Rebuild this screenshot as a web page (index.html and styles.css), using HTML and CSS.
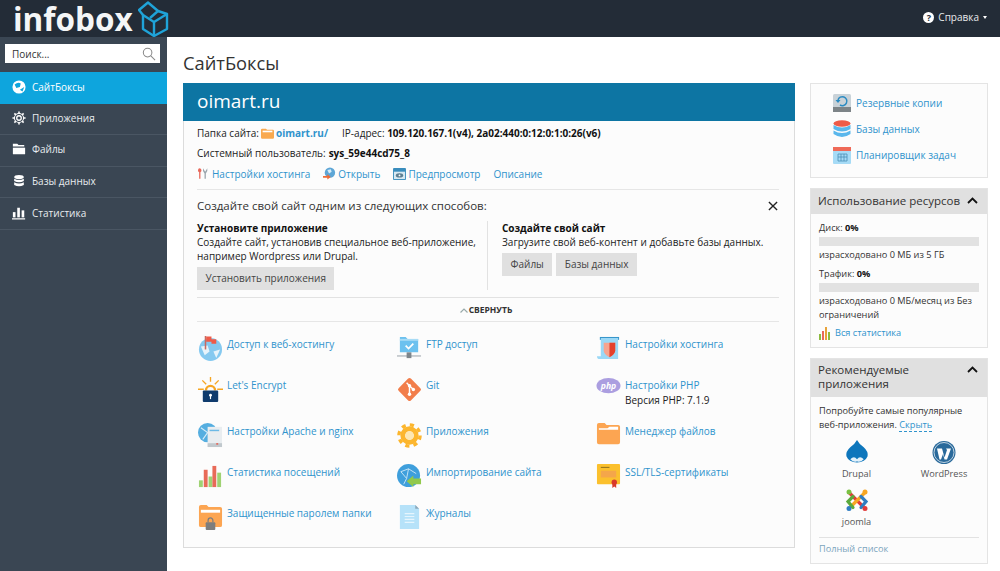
FILE: index.html
```html
<!DOCTYPE html>
<html lang="ru">
<head>
<meta charset="utf-8">
<title>СайтБоксы</title>
<link rel="stylesheet" href="styles.css">
</head>
<body>
<header class="topbar">
  <div class="brand">
    <span class="brand-name">infobox</span>
    <svg class="brand-cube" width="31" height="36" viewBox="0 0 31 36" fill="none" stroke="#1fa3d8" stroke-width="2.4" stroke-linejoin="round"><path d="M5 14 L16 21 L29 13 V28 L16 35 L5 28 Z"/><path d="M16 21 V35"/><path d="M5 14 L1 9 L10 1.500 L20 10 L12 17"/><path d="M20 10 L29 13"/></svg>
  </div>
  <div class="help"><span class="help-q">?</span><span>Справка</span><span class="caret"></span></div>
</header>
<div class="layout">
  <aside class="sidebar">
    <div class="search"><span>Поиск...</span>
      <svg width="14" height="14" viewBox="0 0 15 15" fill="none" stroke="#888" stroke-width="1.100"><circle cx="6" cy="6" r="4.600"/><path d="M9.500 9.500 L14 14"/></svg>
    </div>
    <nav>
      <a class="nav-item active"><svg width="14" height="14" viewBox="0 0 16 16"><circle cx="8" cy="8" r="7.500" fill="#fff"/><path d="M3 5 Q7 2 10 4 L9 8 L5 9 Z M9 11 L14 8 L12 13 Z" fill="#0ea5dd"/></svg>СайтБоксы</a>
      <a class="nav-item"><svg width="14" height="14" viewBox="0 0 16 16" fill="none" stroke="#fff"><circle cx="8" cy="8" r="2.600" stroke-width="1.500"/><circle cx="8" cy="8" r="5.200" stroke-width="1.200"/><path d="M8 0.500V3M8 13V15.500M0.500 8H3M13 8H15.500M2.700 2.700L4.400 4.400M11.600 11.600L13.300 13.300M2.700 13.300L4.400 11.600M11.600 4.400L13.300 2.700" stroke-width="1.800"/></svg>Приложения</a>
      <a class="nav-item"><svg width="14" height="14" viewBox="0 0 16 16" fill="#fff"><path d="M1 2H6L7.500 3.500H14V5H1Z"/><path d="M1 6.500H15V14H1Z"/></svg>Файлы</a>
      <a class="nav-item"><svg width="14" height="14" viewBox="0 0 16 16" fill="#fff"><ellipse cx="8" cy="3.500" rx="5.500" ry="2.400"/><path d="M2.500 5.500Q8 8.400 13.500 5.500V8Q8 10.800 2.500 8Z"/><path d="M2.500 9.500Q8 12.400 13.500 9.500V12.500Q8 15.600 2.500 12.500Z"/></svg>Базы данных</a>
      <a class="nav-item"><svg width="14" height="14" viewBox="0 0 16 16" fill="#fff"><rect x="1" y="7" width="3" height="6"/><rect x="6" y="2" width="3" height="11"/><rect x="11" y="5" width="3" height="8"/><rect x="0" y="14" width="15" height="1.400"/></svg>Статистика</a>
    </nav>
  </aside>
  <main class="content">
    <h1 class="page-title">СайтБоксы</h1>
    <div class="columns">
      <section class="site">
        <div class="site-head">oimart.ru</div>
        <div class="site-body">
          <div class="info-line"><span>Папка сайта:</span>
            <svg class="ic-inline" width="13" height="11" viewBox="0 0 16 13"><path d="M0 2Q0 0.500 1.500 0.500H6L7.500 2H14.500Q16 2 16 3.500V11.500Q16 13 14.500 13H1.500Q0 13 0 11.500Z" fill="#f9a94f"/><rect x="2" y="3" width="12" height="2" fill="#fff"/></svg>
            <a class="link strong">oimart.ru/</a><span class="ip">IP-адрес: <b>109.120.167.1(v4), 2a02:440:0:12:0:1:0:26(v6)</b></span>
          </div>
          <div class="info-line"><span>Системный пользователь:</span><b>sys_59e44cd75_8</b></div>
          <div class="actions">
            <a class="link action wide"><svg width="12" height="13" viewBox="0 0 14 14"><path d="M3 1a2.400 2.400 0 0 1 1 4.500V13H2.500V5.500A2.400 2.400 0 0 1 3 1Z" fill="#e8685a"/><path d="M7 1L9.500 5L12 1V4L10.300 7V13H8.800V7L7 4Z" fill="#9aa5ad"/></svg>Настройки хостинга</a>
            <a class="link action"><svg width="13" height="13" viewBox="0 0 15 14"><circle cx="8" cy="6" r="6" fill="#5ea6d6"/><path d="M5 3L9 2L10 5L7 7Z" fill="#d7ecf8"/><path d="M0 10H5V8L9 11L5 14V12H0Z" fill="#ef6c36"/></svg>Открыть</a>
            <a class="link action"><svg width="13" height="12" viewBox="0 0 14 13"><rect width="14" height="13" rx="1" fill="#3a8dbd"/><rect x="1" y="4" width="12" height="8" fill="#d8e9f2"/><ellipse cx="7" cy="8" rx="4" ry="2.300" fill="#5d7f92"/><circle cx="7" cy="8" r="1" fill="#fff"/></svg>Предпросмотр</a>
            <a class="link action">Описание</a>
          </div>
          <div class="create">
            <div class="create-head"><span>Создайте свой сайт одним из следующих способов:</span>
              <svg width="10" height="10" viewBox="0 0 11 11" stroke="#222" stroke-width="1.500"><path d="M1 1L10 10M10 1L1 10"/></svg>
            </div>
            <div class="create-cols">
              <div class="create-left">
                <b>Установите приложение</b>
                <p>Создайте сайт, установив специальное веб-приложение, например Wordpress или Drupal.</p>
                <span class="btn">Установить приложения</span>
              </div>
              <div class="create-right">
                <b>Создайте свой сайт</b>
                <p>Загрузите свой веб-контент и добавьте базы данных.</p>
                <div class="btn-row"><span class="btn">Файлы</span><span class="btn">Базы данных</span></div>
              </div>
            </div>
          </div>
          <div class="collapse"><svg width="8" height="5" viewBox="0 0 8 5" fill="none" stroke="#9aa" stroke-width="1.200"><path d="M0.500 4.500L4 1L7.500 4.500"/></svg>СВЕРНУТЬ</div>
          <div class="tools">
            <div class="tool"><svg class="tool-ic" viewBox="0 0 26 26"><circle cx="13" cy="14" r="12" fill="#85c9f0"/><path d="M3 11L10 10L12 16L7 20Z M16 16L23 14L19 23Z" fill="#e6f3fb"/><rect x="7" y="0" width="1.600" height="14" fill="#c96a60"/><path d="M8.500 0.500H14V3.500H19V8H14V6H8.500Z" fill="#ef5b48"/></svg><a class="link">Доступ к веб-хостингу</a></div>
            <div class="tool"><svg class="tool-ic" viewBox="0 0 26 26"><path d="M3 1H9L11 3H22V17H3Z" fill="#6cc1ef"/><rect x="3" y="3" width="19" height="2" fill="#a8dcf6"/><path d="M9 10L12 13L17 8" stroke="#fff" stroke-width="1.800" fill="none"/><rect x="0" y="20" width="25" height="1.500" fill="#b8bec2"/><rect x="10" y="17" width="5" height="6" fill="#7d868c"/></svg><a class="link">FTP доступ</a></div>
            <div class="tool"><svg class="tool-ic" viewBox="0 0 26 26"><rect x="4" y="1" width="20" height="3" fill="#3796cb"/><path d="M5 2H23V24H4Q1 24 1 21H5Z" fill="#9bd8f6"/><path d="M8 7H20V15Q20 19 14 22Q8 19 8 15Z" fill="#f7a48f"/><path d="M14 7H20V15Q20 19 14 22Z" fill="#e5402c"/></svg><a class="link">Настройки хостинга</a></div>
            <div class="tool"><svg class="tool-ic" viewBox="0 0 26 26"><path d="M7 14A6 6 0 0 1 19 14H16.500A3.500 3.500 0 0 0 9.500 14Z" fill="#f6a623"/><path d="M12.300 0H13.700V5H12.300ZM4 4L5 3L9 7L8 8ZM22 4L21 3L17 7L18 8ZM0 12H6V13.500H0ZM20 12H26V13.500H20Z" fill="#f6a623"/><rect x="5" y="14" width="16" height="12" rx="1" fill="#0f3b6d"/><circle cx="13" cy="19" r="1.500" fill="#fff"/><rect x="12.400" y="19" width="1.200" height="4" fill="#fff"/></svg><a class="link">Let's Encrypt</a></div>
            <div class="tool"><svg class="tool-ic" viewBox="0 0 26 26"><rect x="4" y="4" width="18" height="18" rx="2" transform="rotate(45 13 13)" fill="#f27e4b"/><path d="M10 6L13 9M13 9V19M13 9L17 13" stroke="#fff" stroke-width="1.500" fill="none"/><circle cx="13" cy="9" r="1.800" fill="#fff"/><circle cx="13" cy="18" r="1.800" fill="#fff"/><circle cx="17" cy="13" r="1.800" fill="#fff"/></svg><a class="link">Git</a></div>
            <div class="tool tall"><svg class="tool-ic" viewBox="0 0 26 26"><ellipse cx="13" cy="9" rx="12.500" ry="8" fill="#ab9ee0"/><text x="13" y="12.500" text-anchor="middle" class="php-text">php</text></svg><div class="tool-text"><a class="link">Настройки PHP</a><div class="tool-sub">Версия PHP: 7.1.9</div></div></div>
            <div class="tool"><svg class="tool-ic" viewBox="0 0 26 26"><circle cx="10" cy="10" r="10" fill="#55aee0"/><path d="M3 5L10 10L5 17M10 10H18" stroke="#d5ecf9" stroke-width="1.200" fill="none"/><rect x="10" y="4" width="15" height="21" fill="#e9edf0"/><rect x="12" y="7" width="10" height="1.500" fill="#6cb9e6"/><rect x="10" y="21" width="15" height="4" fill="#c0c8cd"/><rect x="19" y="21" width="2" height="1.500" fill="#e85a4a"/></svg><a class="link">Настройки Apache и nginx</a></div>
            <div class="tool"><svg class="tool-ic" viewBox="0 0 26 26"><circle cx="13" cy="13" r="11" fill="none" stroke="#fcb62e" stroke-width="3.500" stroke-dasharray="4.320 4.320"/><circle cx="13" cy="13" r="7" fill="none" stroke="#fcb62e" stroke-width="5"/><circle cx="13" cy="13" r="4.500" fill="#fde7b2"/></svg><a class="link">Приложения</a></div>
            <div class="tool"><svg class="tool-ic" viewBox="0 0 26 26"><path d="M1 2Q1 0 3 0H9L11 2H23Q25 2 25 4V20Q25 22 23 22H3Q1 22 1 20Z" fill="#fca552"/><path d="M3 5.500H12L14 4H23V7H3Z" fill="#fff"/></svg><a class="link">Менеджер файлов</a></div>
            <div class="tool"><svg class="tool-ic" viewBox="0 0 26 26"><rect x="1" y="17" width="4" height="7" fill="#9fd273"/><rect x="6" y="6" width="4" height="18" fill="#e86a58"/><rect x="11" y="13" width="4" height="11" fill="#9fd273"/><rect x="15" y="2" width="4" height="22" fill="#e86a58"/><rect x="20" y="9" width="4" height="15" fill="#9fd273"/></svg><a class="link">Статистика посещений</a></div>
            <div class="tool"><svg class="tool-ic" viewBox="0 0 26 26"><circle cx="12" cy="12" r="12" fill="#3f9fdc"/><path d="M4 8L12 5L20 10M4 8L10 15L12 5M10 15L7 21" stroke="#c6e4f6" stroke-width="1" fill="none"/><path d="M10 18L17 12V15H25V21H17V24Z" fill="#92c94b"/></svg><a class="link">Импортирование сайта</a></div>
            <div class="tool"><svg class="tool-ic" viewBox="0 0 26 26"><rect x="1" y="0" width="24" height="21" rx="1" fill="#fbc02d"/><rect x="5" y="3" width="9" height="1" fill="#8a6d1c"/><rect x="5" y="7" width="16" height="7" fill="#f4a64a"/><circle cx="19" cy="19" r="2.800" fill="#d8392b"/><path d="M17 20L17 25L19 23.500L21 25L21 20Z" fill="#d8392b"/></svg><a class="link">SSL/TLS-сертификаты</a></div>
            <div class="tool"><svg class="tool-ic" viewBox="0 0 26 26"><path d="M1 2Q1 0 3 0H9L11 2H23Q25 2 25 4V21Q25 23 23 23H3Q1 23 1 21Z" fill="#fca552"/><rect x="3" y="5" width="20" height="3" fill="#fff"/><rect x="8" y="18" width="10" height="8" rx="1" fill="#7d7d7d"/><path d="M10.500 18V16A2.500 2.500 0 0 1 15.500 16V18" fill="none" stroke="#7d7d7d" stroke-width="1.300"/></svg><a class="link">Защищенные паролем папки</a></div>
            <div class="tool"><svg class="tool-ic" viewBox="0 0 26 26"><path d="M3 0H19L23 4V25H3Z" fill="#b6e2f9"/><path d="M19 0L23 4H19Z" fill="#8ca7b8"/><path d="M8 9H18M8 12H18M8 15H18M8 18H18" stroke="#e6f5fd" stroke-width="1.200"/></svg><a class="link">Журналы</a></div>
          </div>
        </div>
      </section>
      <aside class="rail">
        <div class="card quick">
          <a class="link quick-row"><svg width="18" height="18" viewBox="0 0 18 18"><rect width="18" height="18" rx="1.500" fill="#c9d2d8"/><rect y="13" width="18" height="5" fill="#7d8488"/><path d="M5 6A4.500 4.500 0 1 1 7 11" fill="none" stroke="#2b8bc2" stroke-width="1.500"/><path d="M2.500 6H7.500L5 9Z" fill="#2b8bc2"/></svg>Резервные копии</a>
          <a class="link quick-row"><svg width="18" height="18" viewBox="0 0 18 18"><ellipse cx="9" cy="3.500" rx="8.500" ry="3.300" fill="#ef5b48"/><path d="M0.500 5Q9 10 17.500 5V9Q9 14 0.500 9Z" fill="#5ab7ec"/><path d="M0.500 10.500Q9 15.500 17.500 10.500V14Q9 20 0.500 14Z" fill="#5ab7ec"/></svg>Базы данных</a>
          <a class="link quick-row"><svg width="18" height="18" viewBox="0 0 18 18"><rect y="1" width="18" height="17" rx="1" fill="#a6dbf6"/><rect y="1" width="18" height="4" fill="#ef6a58"/><path d="M5 8H14V15H5ZM8 8V15M11 8V15M5 11H14" fill="none" stroke="#4a90b8" stroke-width="0.800"/></svg>Планировщик задач</a>
        </div>
        <div class="card">
          <div class="card-head"><span>Использование ресурсов</span><svg class="chev" width="11" height="7" viewBox="0 0 11 7" fill="none" stroke="#111" stroke-width="1.800"><path d="M1 6L5.500 1.500L10 6"/></svg></div>
          <div class="card-body usage">
            <div>Диск: <b>0%</b></div>
            <div class="bar"></div>
            <div>израсходовано 0 МБ из 5 ГБ</div>
            <div class="usage-gap">Трафик: <b>0%</b></div>
            <div class="bar"></div>
            <div>израсходовано 0 МБ/месяц из Без ограничений</div>
            <a class="link usage-link"><svg width="13" height="13" viewBox="0 0 13 13"><rect y="7" width="2" height="6" fill="#8dbb3e"/><rect x="3" y="4" width="2" height="9" fill="#e86a58"/><rect x="6" y="0" width="2" height="13" fill="#e8a33a"/><rect x="9" y="5" width="2" height="8" fill="#8dbb3e"/></svg>Вся статистика</a>
          </div>
        </div>
        <div class="card">
          <div class="card-head tall-head"><span>Рекомендуемые приложения</span><svg class="chev" width="11" height="7" viewBox="0 0 11 7" fill="none" stroke="#111" stroke-width="1.800"><path d="M1 6L5.500 1.500L10 6"/></svg></div>
          <div class="card-body recommend">
            <div>Попробуйте самые популярные веб-приложения. <a class="link dashed">Скрыть</a></div>
            <div class="apps">
              <div class="app"><svg width="24" height="25" viewBox="0 0 24 26"><path d="M12 0Q14 4 19 7.500Q24 12 23 17A11.500 9 0 0 1 1 17Q0 12 5 7.500Q10 4 12 0Z" fill="#0e76bc"/><path d="M5 20Q9 16 12 20Q15 16 19 20Q15 24 12 22Q9 24 5 20Z" fill="#e3f1fa"/></svg><span>Drupal</span></div>
              <div class="app"><svg width="24" height="25" viewBox="0 0 24 24"><circle cx="12" cy="12" r="11.500" fill="#2a6a9b"/><circle cx="12" cy="12" r="10" fill="none" stroke="#fff" stroke-width="0.700"/><path d="M5 8H10L12.500 17L15 9.500L14 8H19L15 19H12.500L11 13.500L9 19H7.500Z" fill="#fff"/></svg><span>WordPress</span></div>
              <div class="app"><svg width="24" height="25" viewBox="0 0 24 24" fill="none" stroke-width="3.200" stroke-linecap="round"><path d="M4 4L18 18" stroke="#e13c3c"/><path d="M20 4L6 18" stroke="#f6a623"/><path d="M8 8L3 13L8 19" stroke="#5ba93c"/><path d="M16 8L21 13L16 19" stroke="#2f7dc2"/><circle cx="4" cy="3.500" r="2.500" fill="#7ac143" stroke="none"/><circle cx="20" cy="3.500" r="2.500" fill="#f6a623" stroke="none"/><circle cx="4" cy="20" r="2.500" fill="#2f7dc2" stroke="none"/><circle cx="20" cy="20" r="2.500" fill="#e13c3c" stroke="none"/></svg><span>joomla</span></div>
            </div>
            <div class="card-foot"><a class="link muted">Полный список</a></div>
          </div>
        </div>
      </aside>
    </div>
  </main>
</div>
</body>
</html>
```

FILE: styles.css
```css
* { box-sizing: border-box; }
html, body { height: 100%; }
body {
  margin: 0;
  background: #fff;
  font-family: "Open Sans", "Noto Sans", sans-serif;
  font-size: 10px;
  line-height: 14px;
  color: #222;
  overflow: hidden;
  display: flex;
  flex-direction: column;
}
a { text-decoration: none; }
b { font-weight: 700; color: #111; }
p { margin: 0; }
.link { color: #2f93cc; }
.strong { font-weight: 700; }

.topbar {
  height: 37px;
  flex: none;
  background: #232c37;
  display: flex;
  align-items: center;
  justify-content: space-between;
  padding: 0 13px;
}
.brand { display: flex; align-items: center; gap: 5px; }
.brand-name {
  font-size: 31.500px;
  font-weight: 700;
  color: #f4f6f7;
  line-height: 36px;
}
.brand-cube { flex: none; }
.help { display: flex; align-items: center; color: #e8eaec; font-size: 10px; gap: 4px; padding-bottom: 3px; }
.help-q {
  width: 11px; height: 11px; border-radius: 50%;
  background: #fff; color: #232c37; font-size: 9px; font-weight: 700;
  line-height: 11px; text-align: center;
}
.caret { border: 2.500px solid transparent; border-top: 3px solid #fff; border-bottom: 0; }

.layout { flex: 1; display: flex; min-height: 0; }
.sidebar { width: 167px; flex: none; background: #3a4653; }
.search {
  height: 19px;
  margin: 7px 7px 9px 5px;
  background: #fff;
  display: flex;
  align-items: center;
  justify-content: space-between;
  padding: 1px 4px 0 7px;
  color: #333;
}
.nav-item {
  height: 31.600px;
  display: flex;
  align-items: center;
  gap: 6px;
  padding: 0 0 2px 12px;
  color: #e8ecef;
  font-size: 10px;
  border-bottom: 1px solid #4a5663;
}
.nav-item.active { background: #0ea5dd; color: #fff; border-bottom: 0; }

.content { flex: 1; min-width: 0; padding: 0 5px 0 16px; }
.page-title {
  margin: 0;
  height: 46px;
  padding-top: 14px;
  font-size: 18.300px;
  line-height: 24px;
  font-weight: 400;
  color: #333;
}
.columns { display: flex; align-items: flex-start; gap: 15px; }
.site { width: 612px; flex: none; border: 1px solid #dcdcdc; border-top: 0; background: #fcfcfc; height: 465px; }
.site-head {
  height: 38px;
  margin: 0 -1px;
  background: #0d75a3;
  color: #fff;
  font-size: 19px;
  line-height: 36px;
  padding-left: 14px;
}
.site-body { padding: 2px 15px 0 13px; }
.info-line { height: 20px; display: flex; align-items: center; gap: 3px; white-space: nowrap; }
.ic-inline { margin: 0 -1px; }
.ip { margin-left: 11px; }
.actions {
  display: flex;
  gap: 13px;
  height: 27px;
  align-items: center;
  padding-bottom: 5px;
  border-bottom: 1px solid #e6e6e6;
}
.action { display: flex; align-items: center; gap: 2px; }
.action.wide { gap: 3px; }
.create { padding-top: 7px; border-bottom: 1px solid #e2e2e2; height: 108px; }
.create-head {
  display: flex; justify-content: space-between; align-items: center;
  font-size: 11.500px; line-height: 17px; padding-right: 1px; color: #333;
}
.create-cols { display: flex; margin-top: 7px; height: 69px; }
.create-left { width: 291px; flex: none; border-right: 1px solid #e2e2e2; }
.create-right { padding-left: 14px; white-space: nowrap; }
.create-cols b { display: block; }
.btn {
  display: inline-block;
  background: #e0e0e0;
  color: #444;
  height: 23px;
  line-height: 23px;
  padding: 0 8.500px;
  margin-top: 4px;
}
.btn-row { display: flex; gap: 4px; }
.collapse {
  height: 24px;
  display: flex;
  align-items: center;
  justify-content: center;
  gap: 1px;
  padding: 1px 4px 0 0;
  font-size: 8.500px;
  font-weight: 700;
  color: #333;
  border-bottom: 1px solid #e6e6e6;
}
.tools {
  display: grid;
  grid-template-columns: 199px 199px 1fr;
  padding: 14px 0 0 1px;
}
.tool { display: flex; gap: 4px; height: 41px; align-items: flex-start; }
.tool:nth-child(n+4):nth-child(-n+6) { height: 46px; }
.tool-ic { flex: none; width: 25px; height: 25px; }
.tool > .link { display: block; margin-top: 1px; }
.tool-text { margin-top: 1px; }
.tool-sub { margin-top: 1px; color: #222; }
.php-text { font: italic 700 9px "Open Sans", sans-serif; fill: #fff; }

.rail { width: 178px; flex: none; display: flex; flex-direction: column; gap: 10px; }
.card { border: 1px solid #e4e4e4; background: #fcfcfc; }
.quick { height: 95px; padding: 10px 0 0 22px; display: flex; flex-direction: column; gap: 8px; }
.quick-row { display: flex; align-items: center; gap: 5px; height: 18px; }
.card-head {
  background: #e0e0e0;
  display: flex; justify-content: space-between;
  align-items: flex-start;
  padding: 3px 9px 0 7px;
  font-size: 11.500px;
  line-height: 17px;
  color: #333;
  height: 25px;
}
.tall-head { height: 38px; padding: 4px 9px 0 7px; line-height: 14px; }
.tall-head span { width: 130px; }
.chev { margin-top: 5px; flex: none; }
.tall-head .chev { margin-top: 3px; }
.card-body { padding: 7px 8px; font-size: 9.200px; color: #333; }
.bar { height: 9px; background: #e2e2e2; margin: 2px 0; }
.usage-gap { margin-top: 5px; }
.usage-link { display: flex; align-items: center; gap: 3px; margin-top: 4px; }
.recommend { line-height: 13.500px; }
.dashed { border-bottom: 1px dashed #2f93cc; }
.apps { display: grid; grid-template-columns: 75px 100px; margin: 9px 0 1px; }
.app { display: flex; flex-direction: column; align-items: center; gap: 2px; color: #555; height: 48px; line-height: 14px; }
.card-foot { border-top: 1px solid #e2e2e2; padding-top: 4px; line-height: 14px; }
.muted { color: #7ba4bd; }
```
